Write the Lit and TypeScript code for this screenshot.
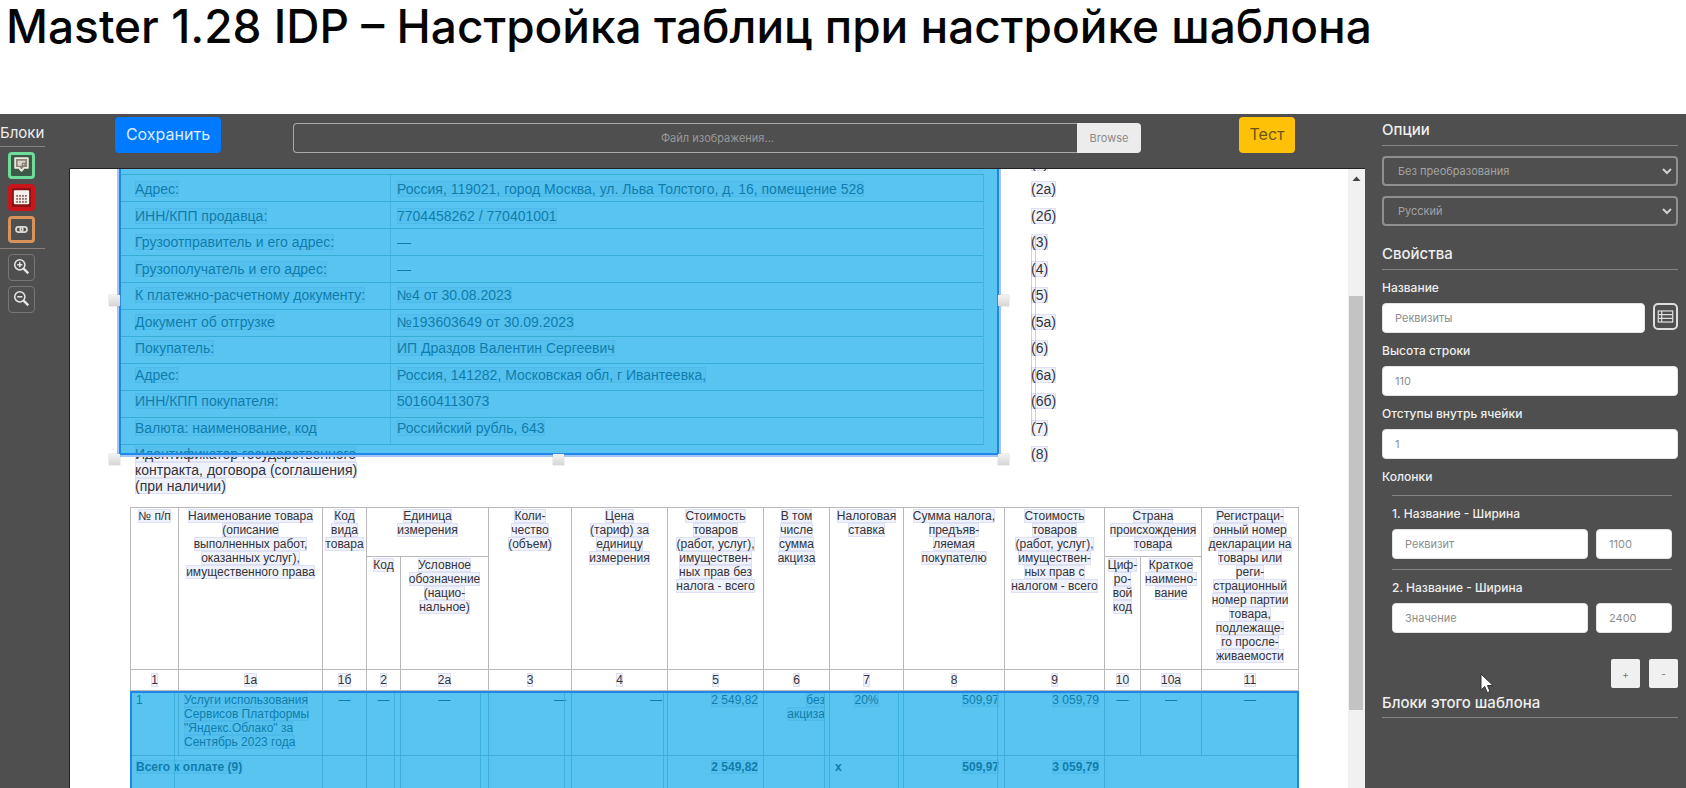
import { LitElement, html, css, svg, TemplateResult } from "lit";
import { customElement, property } from "lit/decorators.js";

const REQUISITES: [string, string, string][] = [
  ["Адрес:", "Россия, 119021, город Москва, ул. Льва Толстого, д. 16, помещение 528", "(2а)"],
  ["ИНН/КПП продавца:", "7704458262 / 770401001", "(2б)"],
  ["Грузоотправитель и его адрес:", "—", "(3)"],
  ["Грузополучатель и его адрес:", "—", "(4)"],
  ["К платежно-расчетному документу:", "№4 от 30.08.2023", "(5)"],
  ["Документ об отгрузке", "№193603649 от 30.09.2023", "(5а)"],
  ["Покупатель:", "ИП Драздов Валентин Сергеевич", "(6)"],
  ["Адрес:", "Россия, 141282, Московская обл, г Ивантеевка,", "(6а)"],
  ["ИНН/КПП покупателя:", "501604113073", "(6б)"],
  ["Валюта: наименование, код", "Российский рубль, 643", "(7)"],
];

const COLUMN_WIDTHS = [48, 144, 44, 34, 88, 83, 96, 96, 66, 74, 101, 100, 36, 61, 97];
const COLUMN_CODES = ["1", "1а", "1б", "2", "2а", "3", "4", "5", "6", "7", "8", "9", "10", "10а", "11"];

const lines = (...rows: string[]): TemplateResult =>
  html`<span class="ocr">${rows.map((r, i) => (i ? html`<br />${r}` : r))}</span>`;

/** Scanned invoice with the recognised text and the selected blocks over it. */
@customElement("doc-canvas")
export class DocCanvas extends LitElement {
  static styles = css`
    :host {
      display: flex;
      min-width: 0;
      background: #fff;
      border-top: 1px solid #222;
      border-left: 1px solid #222;
      overflow: hidden;
      color: #33333a;
      font-family: "Liberation Sans", Arial, sans-serif;
    }
    .page {
      position: relative;
      flex: 1;
      min-width: 0;
      overflow: hidden;
    }
    table {
      border-collapse: collapse;
      table-layout: fixed;
    }
    .requisites {
      width: 1050px;
      margin: -20px 0 0 65px;
      font-size: 14px;
      line-height: 16px;
    }
    .requisites td {
      padding: 0;
      height: 27px;
      white-space: nowrap;
    }
    .requisites tr:nth-child(even) td {
      height: 26px;
    }
    .requisites .last td {
      height: 49px;
      padding-top: 5px;
      vertical-align: top;
    }
    .label { width: 262px; }
    .value { width: 634px; }
    .ocr {
      background: rgba(110, 130, 220, 0.1);
      box-shadow: inset 0 0 0 1px rgba(100, 110, 200, 0.12);
      box-decoration-break: clone;
      -webkit-box-decoration-break: clone;
    }
    .goods {
      width: 1168px;
      margin: 13px 0 0 60px;
      font-size: 12px;
      line-height: 14px;
    }
    .goods th,
    .goods td {
      box-sizing: border-box;
      border: 1px solid #b9b9bd;
      padding: 1px 0 0;
      font-weight: 400;
      text-align: center;
      vertical-align: top;
      white-space: nowrap;
    }
    .goods .group th { height: 49px; }
    .goods .sub th { height: 113px; }
    .goods .codes td {
      height: 21px;
      padding: 0;
      vertical-align: middle;
    }
    .goods .row td { height: 65px; padding-top: 2px; }
    .goods .total td { height: 40px; padding-top: 4px; font-weight: 700; }
    .goods .left { text-align: left; padding-left: 5px; }
    .goods .right { text-align: right; padding-right: 5px; }
    .goods .flush { text-align: right; padding-right: 4px; }
    .block {
      position: absolute;
      box-sizing: border-box;
      background: rgba(0, 165, 230, 0.65);
      border: 2px solid #1f86ea;
    }
    .head {
      top: -28px;
      left: 49px;
      width: 880px;
      height: 314px;
      box-shadow: 0 0 0 2px #a3c6f6;
    }
    .rows {
      position: absolute;
      top: 31px;
      left: 0;
      width: 862px;
      display: grid;
      grid-template-columns: 270px 1fr;
      grid-auto-rows: 27px;
      border-top: 1px solid #35aed4;
      border-right: 1px solid #45b4dc;
    }
    .cell { border-bottom: 1px solid #35aed4; }
    .cell:nth-child(odd) { border-right: 1px solid #45b4dc; }
    .body {
      top: 522px;
      left: 60px;
      width: 1169px;
      height: 220px;
      display: grid;
      grid-template-columns: 43px 220px 86px 84px 99px 161px 74px 99px 1fr;
    }
    .guide { border-right: 1px solid #3fb2da; }
    .guide:last-child { border: 0; }
    .handle {
      position: absolute;
      width: 11px;
      height: 11px;
      background: linear-gradient(#f3f3f3, #d6d6d6);
      box-shadow: 0 0 1px #999;
    }
    .h-left { left: -12px; top: 152px; }
    .h-right { right: -12px; top: 152px; }
    .h-bl { left: -12px; bottom: -12px; }
    .h-b { left: 432px; bottom: -12px; }
    .h-br { right: -12px; bottom: -12px; }
    .marker {
      position: absolute;
      left: 961px;
      top: 68px;
      width: 3px;
      height: 188px;
      border: solid rgba(120, 140, 220, 0.4);
      border-width: 0 1px;
    }
    .scroll {
      display: flex;
      flex-direction: column;
      width: 17px;
      background: #f1f1f1;
    }
    .arrow {
      display: block;
      width: 17px;
      height: 17px;
    }
    .space { flex: 110; }
    .thumb {
      flex: 414;
      margin: 0 2px 0 1px;
      background: #c3c3c3;
    }
    .rest { flex: 78; }
  `;

  render() {
    return html`
      <div class="page">
        <table class="requisites">
          <colgroup><col class="label" /><col class="value" /><col /></colgroup>
          <tbody>
            <tr><td></td><td></td><td>${lines("(2)")}</td></tr>
            ${REQUISITES.map(
              ([label, value, code]) => html`<tr>
                <td>${lines(label)}</td>
                <td>${value === "—" ? value : lines(value)}</td>
                <td>${lines(code)}</td>
              </tr>`
            )}
            <tr class="last">
              <td>${lines("Идентификатор государственного", "контракта, договора (соглашения)", "(при наличии)")}</td>
              <td></td>
              <td>${lines("(8)")}</td>
            </tr>
          </tbody>
        </table>
        <table class="goods">
          <colgroup>${COLUMN_WIDTHS.map((w) => html`<col style="width:${w}px" />`)}</colgroup>
          <thead>
            <tr class="group">
              <th rowspan="2">${lines("№ п/п")}</th>
              <th rowspan="2">${lines("Наименование товара", "(описание", "выполненных работ,", "оказанных услуг),", "имущественного права")}</th>
              <th rowspan="2">${lines("Код", "вида", "товара")}</th>
              <th colspan="2">${lines("Единица", "измерения")}</th>
              <th rowspan="2">${lines("Коли-", "чество", "(объем)")}</th>
              <th rowspan="2">${lines("Цена", "(тариф) за", "единицу", "измерения")}</th>
              <th rowspan="2">${lines("Стоимость", "товаров", "(работ, услуг),", "имуществен-", "ных прав без", "налога - всего")}</th>
              <th rowspan="2">${lines("В том", "числе", "сумма", "акциза")}</th>
              <th rowspan="2">${lines("Налоговая", "ставка")}</th>
              <th rowspan="2">${lines("Сумма налога,", "предъяв-", "ляемая", "покупателю")}</th>
              <th rowspan="2">${lines("Стоимость", "товаров", "(работ, услуг),", "имуществен-", "ных прав с", "налогом - всего")}</th>
              <th colspan="2">${lines("Страна", "происхождения", "товара")}</th>
              <th rowspan="2">${lines("Регистраци-", "онный номер", "декларации на", "товары или", "реги-", "страционный", "номер партии", "товара,", "подлежаще-", "го просле-", "живаемости")}</th>
            </tr>
            <tr class="sub">
              <th>${lines("Код")}</th>
              <th>${lines("Условное", "обозначение", "(нацио-", "нальное)")}</th>
              <th>${lines("Циф-", "ро-", "вой", "код")}</th>
              <th>${lines("Краткое", "наимено-", "вание")}</th>
            </tr>
          </thead>
          <tbody>
            <tr class="codes">${COLUMN_CODES.map((c) => html`<td>${lines(c)}</td>`)}</tr>
            <tr class="row">
              <td class="left">1</td>
              <td class="left">${lines("Услуги использования", "Сервисов Платформы", "\"Яндекс.Облако\" за", "Сентябрь 2023 года")}</td>
              <td>—</td><td>—</td><td>—</td>
              <td class="right">—</td><td class="right">—</td>
              <td class="right">${lines("2 549,82")}</td>
              <td class="flush">${lines("без", "акциза")}</td>
              <td>${lines("20%")}</td>
              <td class="right">${lines("509,97")}</td>
              <td class="right">${lines("3 059,79")}</td>
              <td>—</td><td>—</td><td>—</td>
            </tr>
            <tr class="total">
              <td class="left" colspan="2">${lines("Всего к оплате (9)")}</td>
              <td></td><td></td><td></td><td></td><td></td>
              <td class="right">${lines("2 549,82")}</td>
              <td></td>
              <td class="left">х</td>
              <td class="right">${lines("509,97")}</td>
              <td class="right">${lines("3 059,79")}</td>
              <td colspan="3"></td>
            </tr>
          </tbody>
        </table>
        <div class="marker"></div>
        <div class="block head">
          <div class="rows">
            ${REQUISITES.map(() => html`<div class="cell"></div><div class="cell"></div>`)}
          </div>
          <i class="handle h-left"></i><i class="handle h-right"></i><i class="handle h-bl"></i>
          <i class="handle h-b"></i><i class="handle h-br"></i>
        </div>
        <div class="block body">
          ${Array.from({ length: 9 }, () => html`<div class="guide"></div>`)}
        </div>
      </div>
      <div class="scroll">
        <svg class="arrow" viewBox="0 0 17 17"><path d="M4.5 12 8.5 7.500l4 4.500z" fill="#444" /></svg>
        <div class="space"></div>
        <div class="thumb"></div>
        <div class="rest"></div>
      </div>
    `;
  }
}

const cells = [7, 10.5, 14].map((y) => [3.8, 7.2, 10.6, 14].map((x) => svg`<rect x=${x} y=${y} width="2.2" height="2.2" />`));

const ICONS: Record<string, TemplateResult> = {
  text: svg`<path d="M2.500 2.500h15v11.500h-4.500L10 17.500 7 14H2.500z" fill="#8b8478" stroke="#efe9dd" stroke-width="2" stroke-linejoin="round"/><path d="M5.500 5.500h9v3.500l-3 2.500h-6z" fill="#d9d4ca"/><path d="M11 12v-3.500h4" fill="none" stroke="#5c564c" stroke-width="1"/>`,
  table: svg`<rect x="1" y="1.500" width="18" height="16.500" rx="1.500" fill="#f6f0ec"/><g fill="#8a6a66">${cells}</g>`,
  link: svg`<g fill="none" stroke="#ddd8d2" stroke-width="2"><rect x="3.500" y="7" width="8" height="6" rx="3"/><rect x="8.500" y="7" width="8" height="6" rx="3"/></g>`,
  zoomIn: svg`<g fill="none" stroke="#e6e6e6" stroke-width="1.800"><circle cx="8" cy="8" r="6"/><path d="M5 8h6M8 5v6"/><path d="m12.500 12.500 5.500 5.500" stroke-width="2.800"/></g>`,
  zoomOut: svg`<g fill="none" stroke="#e6e6e6" stroke-width="1.800"><circle cx="8" cy="8" r="6"/><path d="M5 8h6"/><path d="m12.500 12.500 5.500 5.500" stroke-width="2.800"/></g>`,
  list: svg`<g fill="none" stroke="#e0e0e0" stroke-width="1.400"><rect x="1.500" y="3.500" width="17" height="13"/><path d="M1.500 7.800h17M1.500 12.200h17M5.500 3.500v13"/></g>`,
};

@customElement("tool-button")
export class ToolButton extends LitElement {
  @property() icon = "";
  @property() label = "";
  @property({ reflect: true }) tone = "plain";

  static styles = css`
    :host { display: block; }
    button {
      display: grid;
      place-items: center;
      box-sizing: border-box;
      width: 27px;
      height: 27px;
      padding: 0 0 3px;
      background: transparent;
      border: 1px solid #777;
      border-radius: 4px;
      cursor: pointer;
    }
    svg { width: 17px; height: 17px; display: block; }
    :host([tone="green"]) button { border: 3px solid #6fdc9a; background: #3c5a48; }
    :host([tone="red"]) button { border: 4px solid #c9151b; background: #8d1216; padding: 0; }
    :host([tone="orange"]) button { border: 3px solid #d9935a; padding: 0; }
    :host([tone="light"]) button { border: 2px solid #ddd; border-radius: 5px; width: 25px; padding: 0; }
  `;

  render() {
    return html`<button type="button" aria-label=${this.label}>
      <svg viewBox="0 0 20 20" aria-hidden="true">${ICONS[this.icon]}</svg>
    </button>`;
  }
}

@customElement("app-root")
export class AppRoot extends LitElement {
  static styles = css`
    :host {
      display: flex;
      flex-direction: column;
      height: 100vh;
      overflow: hidden;
      background: #fff;
      font-family: Inter, "Noto Sans", sans-serif;
    }
    .title {
      margin: 0;
      padding: 0 6px;
      height: 114px;
      box-sizing: border-box;
      font-size: 46px;
      line-height: 52px;
      font-weight: 500;
      color: #050505;
      white-space: nowrap;
    }
    .editor {
      flex: 1;
      min-height: 0;
      display: grid;
      grid-template-columns: 45px minmax(0, 1fr) 296px;
      background: #4f4f4f;
      color: #eee;
      padding-right: 8px;
    }
    .rail {
      display: flex;
      flex-direction: column;
      align-items: center;
      gap: 5px;
    }
    .rail-title {
      align-self: stretch;
      margin: 0;
      padding: 9px 0 3px;
      font-size: 15px;
      line-height: 20px;
      font-weight: 400;
      border-bottom: 1px solid #858585;
    }
    .rail hr {
      align-self: stretch;
      margin: 0;
      border: 0;
      border-top: 1px solid #8a7f7a;
    }
    .rail tool-button { margin-right: 2px; }
    .work {
      display: flex;
      flex-direction: column;
      min-height: 0;
      padding: 0 17px 0 24px;
    }
    .bar {
      display: flex;
      align-items: flex-start;
      padding: 3px 70px 0 46px;
      height: 54px;
      box-sizing: border-box;
    }
    doc-canvas { flex: 1; min-height: 0; }
    button, input, select { font-family: inherit; }
    .save, .test {
      height: 36px;
      border: 0;
      border-radius: 4px;
      font-size: 16px;
      padding: 0 0 2px;
      cursor: pointer;
    }
    .save { width: 106px; background: #007bff; color: #dcecff; }
    .test { width: 56px; background: #ffc107; color: #6b551a; }
    .file {
      flex: 1;
      display: flex;
      height: 30px;
      margin: 6px 98px 0 72px;
      min-width: 0;
    }
    .file input {
      flex: 1;
      min-width: 0;
      padding: 0 0 0 64px;
      box-sizing: border-box;
      background: transparent;
      border: 1px solid #aaa;
      border-right: 0;
      border-radius: 4px 0 0 4px;
      text-align: center;
      font-size: 11px;
    }
    .file input::placeholder { color: #999; opacity: 1; }
    .file button {
      width: 64px;
      border: 0;
      border-radius: 0 4px 4px 0;
      background: #ececec;
      color: #8a8a8a;
      font-size: 11px;
    }
    .panel { padding-top: 6px; position: relative; }
    h2 {
      margin: 0;
      padding-bottom: 5px;
      border-bottom: 1px solid #858585;
      font-size: 15px;
      line-height: 20px;
      font-weight: 500;
    }
    .section { display: flex; flex-direction: column; gap: 10px; }
    .options { padding-bottom: 18px; }
    .pick { position: relative; display: block; height: 30px; }
    .pick select {
      appearance: none;
      width: 100%;
      height: 30px;
      padding: 0 14px;
      background: transparent;
      border: 2px solid #8f8f8f;
      border-radius: 4px;
      color: #a3a3a3;
      font-size: 11px;
    }
    .pick svg {
      position: absolute;
      right: 5px;
      top: 9px;
      width: 12px;
      height: 12px;
      pointer-events: none;
    }
    .field { display: flex; flex-direction: column; gap: 7px; }
    .field label, .caption {
      font-size: 12px;
      line-height: 16px;
      font-weight: 500;
    }
    .line { display: flex; gap: 8px; }
    .field input {
      box-sizing: border-box;
      width: 100%;
      min-width: 0;
      height: 30px;
      padding: 0 12px;
      border: 1px solid #e4e4e4;
      border-radius: 4px;
      background: #fff;
      color: #8d8d8d;
      font-size: 11px;
    }
    .line input.width { flex: 0 0 76px; }
    .columns {
      display: flex;
      flex-direction: column;
      gap: 10px;
      padding: 0 6px 0 10px;
    }
    .columns hr { margin: 0; border: 0; border-top: 1px solid #858585; }
    .actions {
      display: flex;
      justify-content: flex-end;
      gap: 9px;
      padding: 16px 0 0;
    }
    .actions button {
      width: 29px;
      height: 29px;
      padding: 0;
      border: 0;
      border-radius: 2px;
      background: #f0f0f0;
      color: #777;
      font-size: 10px;
    }
    .own { padding-top: 5px; }
    .own h2 { padding-bottom: 4px; }
    .cursor {
      position: absolute;
      left: 98px;
      top: 559px;
      width: 14px;
      height: 21px;
    }
  `;

  private pick(label: string, value: string) {
    return html`<span class="pick">
      <select aria-label=${label}><option>${value}</option></select>
      <svg viewBox="0 0 12 12" aria-hidden="true"><path d="m2 4 4 4 4-4" fill="none" stroke="#d0d0d0" stroke-width="2" /></svg>
    </span>`;
  }

  private column(n: number, name: string, width: string) {
    return html`<hr />
      <div class="field">
        <label for="col-${n}">${n}. Название - Ширина</label>
        <div class="line">
          <input id="col-${n}" .value=${name} />
          <input class="width" aria-label="Ширина ${n}" .value=${width} />
        </div>
      </div>`;
  }

  render() {
    return html`
      <h1 class="title">Master 1.28 IDP – Настройка таблиц при настройке шаблона</h1>
      <main class="editor">
        <nav class="rail">
          <h2 class="rail-title">Блоки</h2>
          <tool-button icon="text" tone="green" label="Текст"></tool-button>
          <tool-button icon="table" tone="red" label="Таблица"></tool-button>
          <tool-button icon="link" tone="orange" label="Связь"></tool-button>
          <hr />
          <tool-button icon="zoomIn" label="Увеличить"></tool-button>
          <tool-button icon="zoomOut" label="Уменьшить"></tool-button>
        </nav>
        <section class="work">
          <div class="bar">
            <button class="save" type="button">Сохранить</button>
            <div class="file">
              <input type="text" aria-label="Файл изображения" placeholder="Файл изображения..." />
              <button type="button">Browse</button>
            </div>
            <button class="test" type="button">Тест</button>
          </div>
          <doc-canvas></doc-canvas>
        </section>
        <aside class="panel">
          <div class="section options">
            <h2>Опции</h2>
            ${this.pick("Преобразование", "Без преобразования")}
            ${this.pick("Язык", "Русский")}
          </div>
          <div class="section">
            <h2>Свойства</h2>
            <div class="field">
              <label for="name">Название</label>
              <div class="line">
                <input id="name" .value=${"Реквизиты"} />
                <tool-button icon="list" tone="light" label="Список"></tool-button>
              </div>
            </div>
            <div class="field">
              <label for="row-height">Высота строки</label>
              <input id="row-height" .value=${"110"} />
            </div>
            <div class="field">
              <label for="cell-padding">Отступы внутрь ячейки</label>
              <input id="cell-padding" .value=${"1"} />
            </div>
            <div class="caption">Колонки</div>
            <div class="columns">
              ${this.column(1, "Реквизит", "1100")}
              ${this.column(2, "Значение", "2400")}
            </div>
            <div class="actions">
              <button type="button">+</button>
              <button type="button">-</button>
            </div>
          </div>
          <div class="own"><h2>Блоки этого шаблона</h2></div>
          <svg class="cursor" viewBox="0 0 14 21" aria-hidden="true">
            <path d="M1 1v16l3.700-3.500 2.600 6.200 2.700-1.200-2.500-6H13z" fill="#fff" stroke="#333" stroke-width="1" />
          </svg>
        </aside>
      </main>
    `;
  }
}
